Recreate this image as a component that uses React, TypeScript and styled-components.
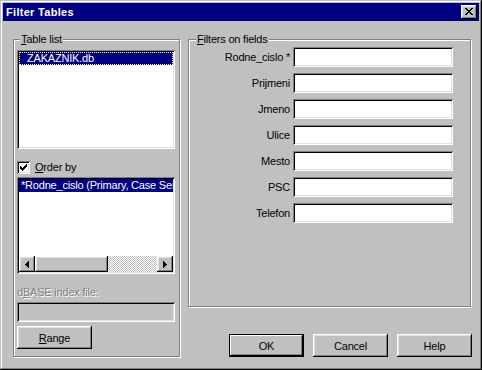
import styled, { createGlobalStyle } from "styled-components";

const fields = ["Rodne_cislo *", "Prijmeni", "Jmeno", "Ulice", "Mesto", "PSC", "Telefon"];

const GlobalStyle = createGlobalStyle`
  html, body { margin: 0; padding: 0; background: #c0c0c0; }
  body {
    font-family: "Liberation Sans", Arial, sans-serif;
    font-size: 11px;
    letter-spacing: -0.2px;
    color: #000;
  }
  * { box-sizing: border-box; }
`;

function CloseIcon() {
  return (
    <svg width="8" height="7" viewBox="0 0 8 7" shapeRendering="crispEdges">
      <path d="M0 0h2v1H0z M6 0h2v1H6z M1 1h2v1H1z M5 1h2v1H5z M2 2h4v1H2z M3 3h2v1H3z M2 4h4v1H2z M1 5h2v1H1z M5 5h2v1H5z M0 6h2v1H0z M6 6h2v1H6z" fill="#000" />
    </svg>
  );
}

function CheckIcon() {
  return (
    <svg width="7" height="7" viewBox="0 0 7 7" shapeRendering="crispEdges">
      <path d="M6 0h1v1H6z M5 1h2v1H5z M0 2h1v1H0z M4 2h3v1H4z M0 3h2v1H0z M3 3h3v1H3z M0 4h5v1H0z M1 5h3v1H1z M2 6h1v1H2z" fill="#000" />
    </svg>
  );
}

function Arrow({ dir }: { dir: "left" | "right" }) {
  return (
    <svg width="4" height="7" viewBox="0 0 4 7" shapeRendering="crispEdges" style={{ transform: dir === "right" ? "scaleX(-1)" : undefined }}>
      <path d="M0 3h1v1H0z M1 2h1v3H1z M2 1h1v5H2z M3 0h1v7H3z" fill="#000" />
    </svg>
  );
}

export default function App() {
  return (
    <>
      <GlobalStyle />
      <Window>
        <TitleBar>
          <span>Filter Tables</span>
          <CloseButton>
            <CloseIcon />
          </CloseButton>
        </TitleBar>
        <Body>
          <LeftGroup>
            <Legend $offset={3}>
              <u>T</u>able list
            </Legend>
            <ListBox $height={99}>
              <Item $focused $indent={8}>ZAKAZNIK.db</Item>
            </ListBox>
            <CheckRow>
              <CheckBox>
                <CheckIcon />
              </CheckBox>
              <span>
                <u>O</u>rder by
              </span>
            </CheckRow>
            <ListBox $height={97} $top={3}>
              <ItemArea>
                <Item $indent={2}>*Rodne_cislo (Primary, Case Sensitive)</Item>
              </ItemArea>
              <HScroll>
                <ScrollButton>
                  <Arrow dir="left" />
                </ScrollButton>
                <Thumb />
                <Track />
                <ScrollButton>
                  <Arrow dir="right" />
                </ScrollButton>
              </HScroll>
            </ListBox>
            <DisabledLabel>
              d<u>B</u>ASE index file:
            </DisabledLabel>
            <Edit $disabled $width={158} disabled />
            <RangeButton>
              <u>R</u>ange
            </RangeButton>
          </LeftGroup>
          <RightColumn>
            <FilterGroup>
              <Legend $offset={7}>
                <u>F</u>ilters on fields
              </Legend>
              <FieldGrid>
                {fields.map((f) => (
                  <FieldRow key={f}>
                    <FieldLabel>{f}</FieldLabel>
                    <Edit $width={160} />
                  </FieldRow>
                ))}
              </FieldGrid>
            </FilterGroup>
            <ButtonRow>
              <Button $default>OK</Button>
              <Button>Cancel</Button>
              <Button>Help</Button>
            </ButtonRow>
          </RightColumn>
        </Body>
      </Window>
    </>
  );
}

const Window = styled.div`
  width: 482px;
  height: 370px;
  background: #c0c0c0;
  padding: 3px;
  display: flex;
  flex-direction: column;
  box-shadow: inset -1px -1px #000, inset 1px 1px #c0c0c0, inset -2px -2px #808080,
    inset 2px 2px #fff;
`;

const TitleBar = styled.div`
  height: 18px;
  background: #000080;
  color: #fff;
  font-weight: bold;
  letter-spacing: 0.3px;
  display: flex;
  align-items: center;
  justify-content: space-between;
  padding: 0 2px 0 3px;
`;

const raised = `
  background: #c0c0c0;
  box-shadow: inset -1px -1px #000, inset 1px 1px #fff, inset -2px -2px #808080,
    inset 2px 2px #dfdfdf;
`;

const sunken = `
  box-shadow: inset 1px 1px #808080, inset -1px -1px #fff, inset 2px 2px #000,
    inset -2px -2px #dfdfdf;
`;

const CloseButton = styled.div`
  ${raised}
  width: 16px;
  height: 14px;
  display: flex;
  align-items: center;
  justify-content: center;
  padding-bottom: 1px;
`;

const Body = styled.div`
  flex: 1;
  display: flex;
  gap: 8px;
  padding: 12px 7px 10px 10px;
`;

const Group = styled.fieldset`
  margin: 0;
  min-width: 0;
  border: 1px solid #808080;
  box-shadow: inset 1px 1px #fff, 1px 1px #fff;
`;

const LeftGroup = styled(Group)`
  width: 167px;
  padding: 4px 3px 0 3px;
  display: flex;
  flex-direction: column;

  & > * {
    flex-shrink: 0;
  }
`;

const Legend = styled.legend<{ $offset: number }>`
  padding: 0 1px;
  margin-left: ${(p) => p.$offset}px;
  line-height: 13px;
  background: #c0c0c0;
`;

const ListBox = styled.div<{ $height: number; $top?: number }>`
  ${sunken}
  background: #fff;
  width: 158px;
  height: ${(p) => p.$height}px;
  margin-top: ${(p) => p.$top ?? 0}px;
  padding: 2px;
  display: flex;
  flex-direction: column;
  overflow: hidden;
`;

const ItemArea = styled.div`
  flex: 1;
`;

const Item = styled.div<{ $focused?: boolean; $indent: number }>`
  background: #000080;
  color: #fff;
  height: 13px;
  line-height: 13px;
  padding-left: ${(p) => p.$indent}px;
  white-space: nowrap;
  overflow: hidden;
  outline: ${(p) => (p.$focused ? "1px dotted #ffff80" : "none")};
  outline-offset: -1px;
`;

const HScroll = styled.div`
  height: 16px;
  display: flex;
  flex-shrink: 0;
`;

const ScrollButton = styled.div`
  ${raised}
  width: 16px;
  height: 16px;
  display: flex;
  align-items: center;
  justify-content: center;
`;

const Thumb = styled.div`
  ${raised}
  width: 73px;
  height: 16px;
`;

const Track = styled.div`
  flex: 1;
  background-color: #c0c0c0;
  background-image: conic-gradient(#fff 25%, #c0c0c0 0 50%, #fff 0 75%, #c0c0c0 0);
  background-size: 2px 2px;
`;

const CheckRow = styled.div`
  display: flex;
  align-items: center;
  gap: 5px;
  margin-top: 12px;
  height: 13px;
  line-height: 13px;
`;

const CheckBox = styled.div`
  ${sunken}
  background: #fff;
  width: 13px;
  height: 13px;
  display: flex;
  align-items: center;
  justify-content: center;
`;

const DisabledLabel = styled.div`
  margin-top: 12px;
  height: 13px;
  line-height: 13px;
  color: #808080;
  text-shadow: 1px 1px #fff;
`;

const Edit = styled.input<{ $disabled?: boolean; $width: number }>`
  ${sunken}
  border: none;
  outline: none;
  font: inherit;
  width: ${(p) => p.$width}px;
  height: 20px;
  margin: 3px 0 0;
  padding: 0 3px;
  background: ${(p) => (p.$disabled ? "#c0c0c0" : "#fff")};
`;

const Button = styled.button<{ $default?: boolean }>`
  font: inherit;
  letter-spacing: inherit;
  color: #000;
  width: 75px;
  height: 23px;
  margin: 0;
  padding: 0;
  background: #c0c0c0;
  border: ${(p) => (p.$default ? "1px solid #000" : "none")};
  box-shadow: ${(p) =>
    p.$default
      ? "inset -1px -1px #000, inset 1px 1px #fff, inset -2px -2px #808080"
      : "inset -1px -1px #000, inset 1px 1px #fff, inset -2px -2px #808080, inset 2px 2px #dfdfdf"};
`;

const RangeButton = styled(Button)`
  margin-top: 4px;
`;

const RightColumn = styled.div`
  width: 284px;
  display: flex;
  flex-direction: column;
`;

const FilterGroup = styled(Group)`
  flex: 1;
  width: 283px;
  padding: 1px 17px 0 0;
`;

const FieldGrid = styled.div`
  display: flex;
  flex-direction: column;
  gap: 6px;
`;

const FieldRow = styled.div`
  display: grid;
  grid-template-columns: 1fr 160px;
  column-gap: 3px;
  align-items: center;

  & > input {
    margin: 0;
  }
`;

const FieldLabel = styled.span`
  text-align: right;
  white-space: nowrap;
`;

const ButtonRow = styled.div`
  display: flex;
  justify-content: flex-end;
  gap: 9px;
  margin-top: 27px;
`;
